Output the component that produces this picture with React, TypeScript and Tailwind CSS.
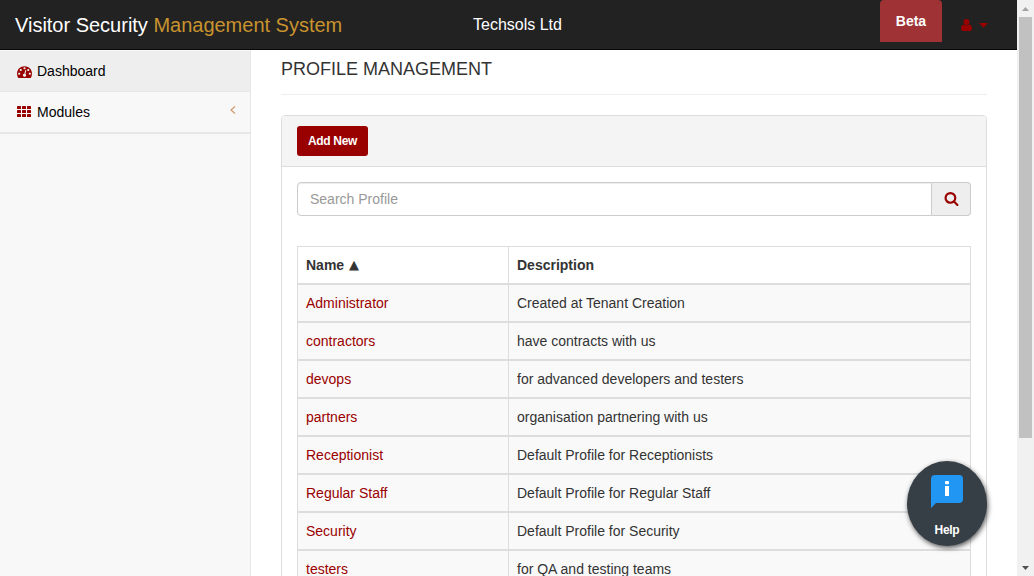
import React from "react";

const profiles = [
  { name: "Administrator", description: "Created at Tenant Creation" },
  { name: "contractors", description: "have contracts with us" },
  { name: "devops", description: "for advanced developers and testers" },
  { name: "partners", description: "organisation partnering with us" },
  { name: "Receptionist", description: "Default Profile for Receptionists" },
  { name: "Regular Staff", description: "Default Profile for Regular Staff" },
  { name: "Security", description: "Default Profile for Security" },
  { name: "testers", description: "for QA and testing teams" },
];

function DashboardIcon() {
  return (
    <svg className="h-[15px] w-[15px] shrink-0" viewBox="0 0 1792 1792" fill="#990000">
      <path d="M384 1152q0-53-37.5-90.5t-90.5-37.5-90.5 37.5-37.5 90.5 37.5 90.5 90.5 37.5 90.5-37.5 37.5-90.5zm192-448q0-53-37.5-90.5t-90.5-37.5-90.5 37.5-37.5 90.5 37.5 90.5 90.5 37.5 90.5-37.5 37.5-90.5zm428 481l101-382q6-26-7.5-48.5t-38.5-29.5-48 6.5-30 39.5l-101 382q-60 5-107 43.5t-63 98.5q-20 77 20 146t117 89 146-20 89-117q16-60-6-117t-72-91zm660-33q0-53-37.5-90.5t-90.5-37.5-90.5 37.5-37.5 90.5 37.5 90.5 90.5 37.5 90.5-37.5 37.5-90.5zm-640-640q0-53-37.5-90.5t-90.5-37.5-90.5 37.5-37.5 90.5 37.5 90.5 90.5 37.5 90.5-37.5 37.5-90.5zm448 192q0-53-37.5-90.5t-90.5-37.5-90.5 37.5-37.5 90.5 37.5 90.5 90.5 37.5 90.5-37.5 37.5-90.5zm320 448q0 261-141 483-19 29-54 29h-1402q-35 0-54-29-141-221-141-483 0-182 71-348t191-286 286-191 348-71 348 71 286 191 191 286 71 348z" />
    </svg>
  );
}

function GridIcon() {
  return (
    <svg className="mb-px h-[11px] w-[14px] shrink-0" viewBox="0 0 14 11" fill="#990000">
      {[0, 4, 8].map((y) =>
        [0, 5, 10].map((x) => (
          <rect key={`${x}-${y}`} x={x} y={y} width="4" height="3" rx="0.5" />
        ))
      )}
    </svg>
  );
}

function SearchIcon() {
  return (
    <svg className="mb-[2px] h-[15px] w-[15px]" viewBox="0 0 1792 1792" fill="#990000">
      <path d="M1216 832q0-185-131.5-316.5t-316.5-131.5-316.5 131.5-131.5 316.5 131.5 316.5 316.5 131.5 316.5-131.5 131.5-316.5zm512 832q0 52-38 90t-90 38q-54 0-90-38l-343-342q-179 124-399 124-143 0-273.5-55.5t-225-150-150-225-55.5-273.5 55.5-273.5 150-225 225-150 273.5-55.5 273.5 55.5 225 150 150 225 55.5 273.5q0 220-124 399l343 343q37 37 37 90z" />
    </svg>
  );
}

function Header() {
  return (
    <header className="flex h-[50px] shrink-0 border-b border-[#080808] bg-[#222]">
      <div className="w-[458px] whitespace-nowrap pl-[15px] pt-[10px] text-[20px] leading-[30px] tracking-[-0.01px] text-white">
        Visitor Security <span className="text-[#c9932e]">Management System</span>
      </div>
      <div className="flex-1 whitespace-nowrap pl-[15px] pt-[15px] text-[16px] leading-5 text-white">Techsols Ltd</div>
      <div className="flex h-[42px] w-[62px] items-center justify-center rounded-t bg-[#9e3234] text-[14px] font-bold text-white">
        Beta
      </div>
      <div className="flex w-[75px] gap-[7px] pl-[19px] pt-[19px]">
        <svg className="h-[12px] w-[11px]" viewBox="0 0 11 12" fill="#990000">
          <circle cx="5.5" cy="3" r="3" />
          <path d="M2.4 5.4Q5.5 7.2 8.6 5.4Q11 6 11 9.8Q11 12 9 12H2Q0 12 0 9.8Q0 6 2.4 5.4Z" />
        </svg>
        <svg className="mt-[4px] h-[5px] w-[9px]" viewBox="0 0 9 5" fill="#990000">
          <path d="M0 0H9L4.5 4.7Z" />
        </svg>
      </div>
    </header>
  );
}

function Sidebar() {
  return (
    <aside className="w-[251px] shrink-0 border-r border-[#e7e7e7] bg-[#f8f8f8] pt-px text-[14px] text-black">
      <nav>
        <a className="flex h-[41px] items-center gap-[5px] border-b border-[#e7e7e7] bg-[#eee] pl-[17px]">
          <DashboardIcon />
          <span>Dashboard</span>
        </a>
        <a className="flex h-[42px] items-center gap-[6px] border-b-2 border-[#e7e7e7] pl-[17px] pr-[14px]">
          <GridIcon />
          <span className="flex-1">Modules</span>
          <svg className="mb-[5px] h-[8px] w-[6px]" viewBox="0 0 6 8" fill="none" stroke="#cf9a6b" strokeWidth="1.2">
            <path d="M5 0.5L1 4L5 7.5" />
          </svg>
        </a>
      </nav>
    </aside>
  );
}

function ProfileTable() {
  return (
    <table className="mt-[30px] w-full table-fixed border-collapse border border-[#ddd] text-left text-[14px] leading-5 text-[#333]">
      <colgroup>
        <col className="w-[211px]" />
        <col />
      </colgroup>
      <thead>
        <tr className="h-[37px]">
          <th className="border-r border-b-2 border-[#ddd] px-2 pt-px pb-0 font-bold">
            Name{" "}
            <span className="relative -top-px ml-px font-['DejaVu_Sans',sans-serif] text-[13px] font-normal leading-none">▲</span>
          </th>
          <th className="border-b-2 border-[#ddd] px-2 pt-px pb-0 font-bold">Description</th>
        </tr>
      </thead>
      <tbody>
        {profiles.map((p) => (
          <tr key={p.name} className="h-[38px] bg-[#f9f9f9]">
            <td className="border-r border-b-2 border-[#ddd] px-2 py-0 text-[#990000]">{p.name}</td>
            <td className="border-b-2 border-[#ddd] px-2 py-0">{p.description}</td>
          </tr>
        ))}
      </tbody>
    </table>
  );
}

function Scrollbar() {
  return (
    <div className="flex h-full w-[17px] shrink-0 flex-col items-center bg-[#f1f1f1]">
      <div className="flex h-[17px] items-center">
        <svg className="h-[4px] w-[7px]" viewBox="0 0 7 4" fill="#a3a3a3">
          <path d="M0 4L3.5 0L7 4Z" />
        </svg>
      </div>
      <div className="h-[421px] w-[13px] bg-[#c1c1c1]" />
      <div className="mt-auto flex h-[17px] items-center">
        <svg className="h-[4px] w-[7px]" viewBox="0 0 7 4" fill="#505050">
          <path d="M0 0L3.5 4L7 0Z" />
        </svg>
      </div>
    </div>
  );
}

function HelpButton() {
  return (
    <button className="absolute left-[907px] top-[461px] flex h-[85px] w-[80px] flex-col items-center rounded-[50%] bg-[#373f46] pt-[14px] shadow-[1px_2px_5px_rgba(0,0,0,0.65)]">
      <svg className="h-[33px] w-[32px]" viewBox="0 0 32 33">
        <path d="M4 0H28Q32 0 32 4V24Q32 28 28 28H5L0 33V4Q0 0 4 0Z" fill="#2196f3" />
        <rect x="14" y="6" width="4" height="3.2" rx="1" fill="#fff" />
        <rect x="14" y="11" width="4" height="10" fill="#fff" />
      </svg>
      <span className="mt-[14px] text-[12px] font-bold leading-4 tracking-[-0.3px] text-white">Help</span>
    </button>
  );
}

export default function App() {
  return (
    <div className="relative flex h-[576px] w-[1034px] overflow-hidden bg-white font-['Liberation_Sans',Arial,sans-serif]">
      <div className="flex h-full min-w-0 flex-1 flex-col">
        <Header />
        <div className="flex min-h-0 flex-1">
          <Sidebar />
          <main className="min-w-0 flex-1 overflow-hidden pl-[30px] pr-[30px]">
            <h1 className="h-[45px] border-b border-[#eee] pt-[9px] text-[18px] leading-5 text-[#333]">PROFILE MANAGEMENT</h1>
            <section className="mt-5 rounded border border-[#ddd]">
              <div className="h-[51px] rounded-t-[3px] border-b border-[#ddd] bg-[#f4f4f4] px-[15px] pt-[10px]">
                <button className="h-[30px] w-[71px] rounded-[3px] bg-[#990000] text-[12px] font-bold tracking-[-0.3px] text-white">Add New</button>
              </div>
              <div className="p-[15px]">
                <div className="flex h-[34px]">
                  <input
                    className="min-w-0 flex-1 rounded-l border border-[#ccc] px-3 text-[14px] shadow-[inset_0_1px_1px_rgba(0,0,0,0.075)] outline-none placeholder:text-[#999]"
                    placeholder="Search Profile"
                  />
                  <button className="flex w-[39px] items-center justify-center rounded-r border border-l-0 border-[#ccc] bg-[#eee]">
                    <SearchIcon />
                  </button>
                </div>
                <ProfileTable />
              </div>
            </section>
          </main>
        </div>
      </div>
      <Scrollbar />
      <HelpButton />
    </div>
  );
}
